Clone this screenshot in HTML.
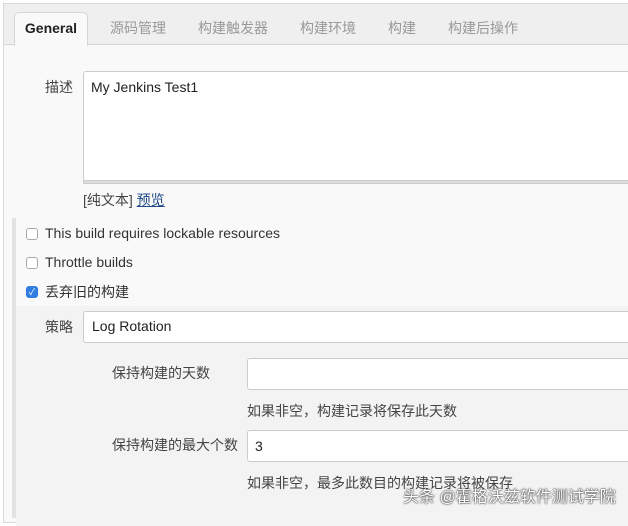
<!DOCTYPE html>
<html><head><meta charset="utf-8"><style>
*{box-sizing:border-box;margin:0;padding:0}
body{width:628px;height:516px;overflow:hidden;background:#fff;font-family:"Liberation Sans","Noto Sans CJK SC",sans-serif;font-size:14px;color:#333;position:relative}
.abs{position:absolute}
.frame{left:3px;top:3px;width:640px;height:520px;border:1px solid #d8d8d8;background:#f9f9f9}
.tabbar{left:4px;top:4px;width:640px;height:41px;background:#efefef;border-bottom:1px solid #d6d6d6}
.tab{top:18px;color:#999;font-size:14px}
.gen{left:14px;top:12px;width:74px;height:34px;background:#f9f9f9;border:1px solid #d6d6d6;border-bottom:none;border-radius:5px 5px 0 0;font-weight:bold;color:#222;text-align:center;line-height:31px}
.inp{background:#fff;border:1px solid #ccc;border-radius:3px;width:600px}
.cb{left:26px;width:12px;height:12px;border:1px solid #aaa;border-radius:3px;background:#fff}
.lbl{color:#444}
</style></head><body>
<div class="abs frame"></div>
<div class="abs tabbar"></div>
<div class="abs gen">General</div>
<div class="abs tab" style="left:110px">源码管理</div>
<div class="abs tab" style="left:198px">构建触发器</div>
<div class="abs tab" style="left:300px">构建环境</div>
<div class="abs tab" style="left:388px">构建</div>
<div class="abs tab" style="left:448px">构建后操作</div>

<div class="abs lbl" style="left:45px;top:77px">描述</div>
<div class="abs inp" style="left:83px;top:71px;height:110px;border-radius:3px 0 0 0;padding:7px 7px;color:#222">My Jenkins Test1</div>
<div class="abs" style="left:83px;top:180px;width:600px;height:4px;background:#ddd;border:1px solid #ccc"></div>
<div class="abs" style="left:83px;top:190px;color:#444">[纯文本] <span style="color:#204a87;text-decoration:underline">预览</span></div>

<div class="abs" style="left:12px;top:218px;width:4px;height:300px;background:#e2e2e2"></div>
<div class="abs cb" style="top:228px"></div>
<div class="abs" style="left:45px;top:225px;color:#333">This build requires lockable resources</div>
<div class="abs cb" style="top:257px"></div>
<div class="abs" style="left:45px;top:254px;color:#333">Throttle builds</div>
<div class="abs cb" style="top:286px;background:#2f7de1;border-color:#2f7de1;color:#fff;font-size:9px;line-height:10px;text-align:center">✓</div>
<div class="abs" style="left:45px;top:282px;color:#333">丢弃旧的构建</div>

<div class="abs" style="left:16px;top:306px;width:620px;height:220px;background:#f3f3f3"></div>
<div class="abs lbl" style="left:45px;top:317px">策略</div>
<div class="abs inp" style="left:83px;top:311px;height:32px;padding:6px 8px;color:#222">Log Rotation</div>
<div class="abs lbl" style="left:112px;top:363px">保持构建的天数</div>
<div class="abs inp" style="left:247px;top:358px;height:32px"></div>
<div class="abs lbl" style="left:247px;top:401px">如果非空，构建记录将保存此天数</div>
<div class="abs lbl" style="left:112px;top:435px">保持构建的最大个数</div>
<div class="abs inp" style="left:247px;top:430px;height:32px;padding:7px 7px;color:#222">3</div>
<div class="abs lbl" style="left:247px;top:473px">如果非空，最多此数目的构建记录将被保存</div>
<div class="abs" style="left:403px;top:483px;font-size:16px;color:#fff;text-shadow:0 0 2px #333,0 0 1px #000">头条 @霍格沃兹软件测试学院</div>
</body></html>
